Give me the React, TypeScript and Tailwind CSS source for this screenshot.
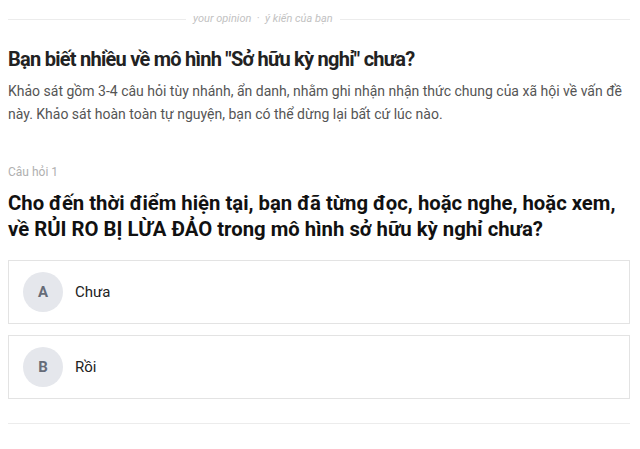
import React from 'react'

const options = [
  { key: 'A', label: 'Chưa' },
  { key: 'B', label: 'Rồi' },
]

export default function App() {
  return (
    <div className="min-h-[449px] bg-white font-['Roboto',sans-serif]">
      <div className="w-[622px] ml-2 pt-[11px]">
        {/* Section label */}
        <div className="flex items-center gap-[7px]">
          <div className="h-px w-[178px] bg-[#ececec]" />
          <span className="text-[11px] italic text-[#c2c2c2] leading-[16px]">
            your opinion&nbsp; · &nbsp;ý kiến của bạn
          </span>
          <div className="h-px flex-1 bg-[#ececec]" />
        </div>

        <h1 className="mt-[18px] text-[20px] font-bold tracking-[-0.75px] leading-[28px] text-[#222]">
          Bạn biết nhiều về mô hình "Sở hữu kỳ nghỉ" chưa?
        </h1>
        <p className="mt-[7px] text-[14px] leading-[23px] text-[#555]">
          Khảo sát gồm 3-4 câu hỏi tùy nhánh, ẩn danh, nhằm ghi nhận nhận thức chung của xã hội về vấn đề này. Khảo sát hoàn toàn tự nguyện, bạn có thể dừng lại bất cứ lúc nào.
        </p>

        <div className="mt-[38px] text-[12px] leading-[16px] text-[#b0b0b0]">Câu hỏi 1</div>
        <h2 className="mt-[10px] text-[20.3px] font-bold leading-[26px] text-[#111]">
          Cho đến thời điểm hiện tại, bạn đã từng đọc, hoặc nghe, hoặc xem, về RỦI RO BỊ LỪA ĐẢO trong mô hình sở hữu kỳ nghỉ chưa?
        </h2>

        <div className="mt-[18px] flex flex-col gap-[11px]">
          {options.map(o => (
            <div key={o.key} className="flex items-center gap-3 border border-[#e3e3e3] h-[64px] px-[14px]">
              <span className="w-10 h-10 rounded-full bg-[#e5e7ec] flex items-center justify-center text-[15px] font-bold text-[#666c78]">
                {o.key}
              </span>
              <span className="text-[15px] text-[#222]">{o.label}</span>
            </div>
          ))}
        </div>

        <div className="mt-[24px] h-px bg-[#ececec]" />
      </div>
    </div>
  )
}
